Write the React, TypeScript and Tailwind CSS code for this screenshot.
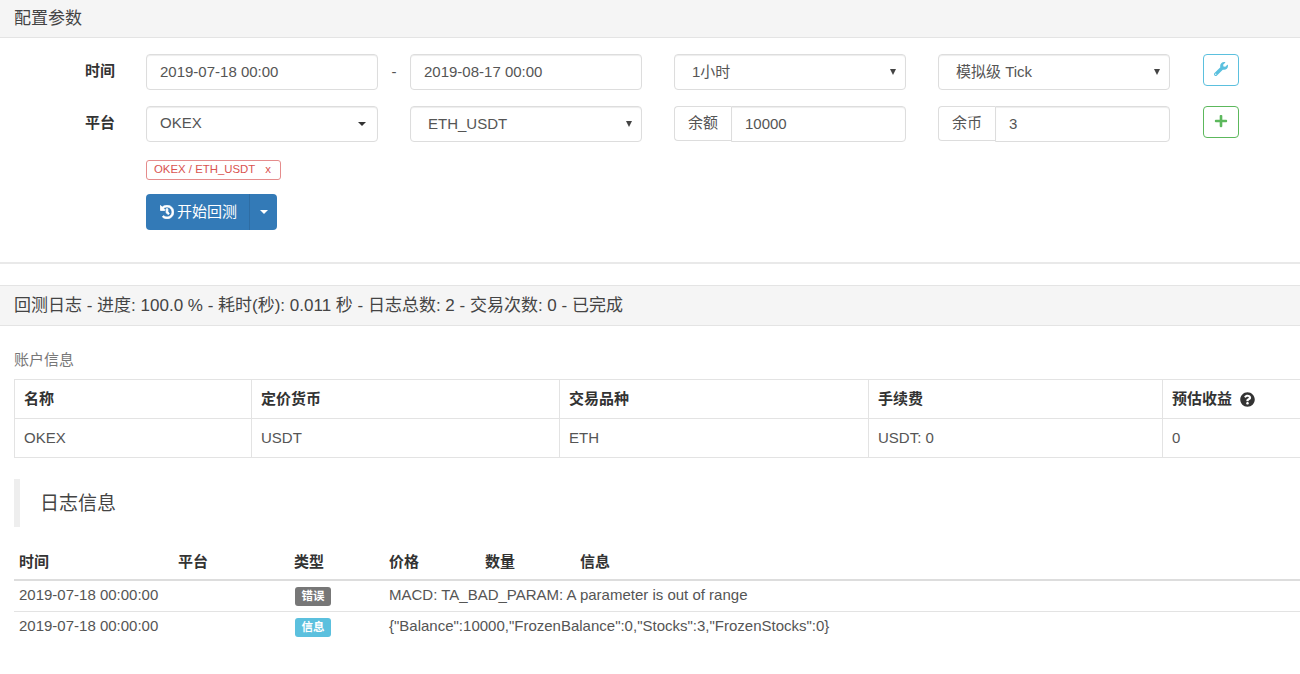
import { FaHistory, FaPlus, FaQuestionCircle, FaWrench } from "react-icons/fa";

const FONT = "font-['Liberation_Sans','Noto_Sans_CJK_SC',sans-serif]";
const FIELD =
  "h-9 rounded border border-[#ddd] bg-white text-[15px] text-[#555] shadow-[inset_0_1px_1px_rgba(0,0,0,0.075)]";

function TextInput({ value }: { value: string }) {
  return <input readOnly value={value} className={`${FIELD} w-[232px] px-[13px] pb-[2px] outline-none`} />;
}

function Select({ value, dark, pad }: { value: string; dark?: boolean; pad: string }) {
  return (
    <div className={`${FIELD} ${pad} relative flex w-[232px] items-center`}>
      <span>{value}</span>
      {dark ? (
        <span className="absolute right-[11px] top-[15px] border-x-[4px] border-t-[4px] border-x-transparent border-t-[#333]" />
      ) : (
        <span className="absolute right-[9px] top-[14px] border-x-[3px] border-t-[6px] border-x-transparent border-t-[#444]" />
      )}
    </div>
  );
}

function AddonInput({ label, value }: { label: string; value: string }) {
  return (
    <div className="flex w-[232px] items-start text-[15px] text-[#555]">
      <div className="flex h-[35px] w-[57px] items-center justify-center rounded-l border border-r-0 border-[#ddd]">
        {label}
      </div>
      <input
        readOnly
        value={value}
        className="h-9 w-[175px] rounded-r border border-[#ddd] px-[13px] pb-[2px] shadow-[inset_0_1px_1px_rgba(0,0,0,0.075)] outline-none"
      />
    </div>
  );
}

function FormRow({ label, children }: { label: string; children: React.ReactNode }) {
  return (
    <div className="flex items-start">
      <label className="mr-[31px] w-[115px] pb-[2px] text-right text-[15px] font-bold leading-[34px] text-[#333]">
        {label}
      </label>
      {children}
    </div>
  );
}

const accountHead = ["名称", "定价货币", "交易品种", "手续费"];
const accountRow = ["OKEX", "USDT", "ETH", "USDT: 0", "0"];
const logHead = ["时间", "平台", "类型", "价格", "数量", "信息"];

const logs = [
  {
    time: "2019-07-18 00:00:00",
    type: "错误",
    color: "bg-[#777]",
    info: "MACD: TA_BAD_PARAM: A parameter is out of range",
  },
  {
    time: "2019-07-18 00:00:00",
    type: "信息",
    color: "bg-[#5bc0de]",
    info: '{"Balance":10000,"FrozenBalance":0,"Stocks":3,"FrozenStocks":0}',
  },
];

export default function App() {
  return (
    <div className={`${FONT} h-[674px] w-[1300px] overflow-hidden bg-white text-[15px] text-[#333]`}>
      {/* Config panel */}
      <div className="flex h-[38px] items-center border-b border-[#e4e4e4] bg-[#f5f5f5] px-[14px] text-[17px] text-[#444]">
        配置参数
      </div>
      <div className="border-b-2 border-[#e9e9e9] pb-[32px] pt-4">
        <div className="flex flex-col gap-4">
          <FormRow label="时间">
            <TextInput value="2019-07-18 00:00" />
            <span className="w-8 text-center leading-9 text-[#555]">-</span>
            <TextInput value="2019-08-17 00:00" />
            <div className="ml-8">
              <Select value="1小时" pad="pl-[17px]" />
            </div>
            <div className="ml-8">
              <Select value="模拟级 Tick" pad="pl-[17px]" />
            </div>
            <button className="ml-[33px] flex h-8 w-9 items-center justify-center rounded border border-[#5bc0de] pb-[3px] text-[14px] text-[#5bc0de]">
              <FaWrench />
            </button>
          </FormRow>
          <FormRow label="平台">
            <Select value="OKEX" dark pad="pl-[13px] pb-[2px]" />
            <div className="ml-8">
              <Select value="ETH_USDT" pad="pl-[17px]" />
            </div>
            <div className="ml-8">
              <AddonInput label="余额" value="10000" />
            </div>
            <div className="ml-8">
              <AddonInput label="余币" value="3" />
            </div>
            <button className="ml-[33px] flex h-8 w-9 items-center justify-center rounded border border-[#5cb85c] pb-[3px] text-[14px] text-[#5cb85c]">
              <FaPlus />
            </button>
          </FormRow>
        </div>
        <div className="ml-[146px] mt-[18px] flex h-5 w-[135px] items-center justify-between rounded-[3px] border border-[#e58c8c] pl-[7px] pr-[9px] text-[11.4px] text-[#d9534f]">
          <span>OKEX / ETH_USDT</span>
          <span>x</span>
        </div>
        <div className="ml-[146px] mt-[14px] flex h-9 w-[131px] rounded bg-[#337ab7] text-white">
          <button className="flex w-[104px] items-center justify-center gap-[3px] border-r border-[#2e6da4] pl-[2px]">
            <FaHistory className="text-[14px] [stroke-width:30px]" />
            <span>开始回测</span>
          </button>
          <button className="flex flex-1 items-center justify-center">
            <span className="border-x-[4px] border-t-[4px] border-x-transparent border-t-white" />
          </button>
        </div>
      </div>

      {/* Backtest log panel */}
      <div className="mt-[21px] flex h-[41px] items-center border-y border-[#e4e4e4] bg-[#f5f5f5] px-[14px] text-[17px] text-[#444]">
        回测日志 - 进度: 100.0 % - 耗时(秒): 0.011 秒 - 日志总数: 2 - 交易次数: 0 - 已完成
      </div>
      <div className="pl-[14px]">
        <div className="mt-[23px] h-[22px] text-[15px] leading-[22px] text-[#777]">账户信息</div>
        <table className="mt-2 w-[1300px] table-fixed border-collapse">
          <colgroup>
            <col className="w-[237px]" />
            <col className="w-[308px]" />
            <col className="w-[309px]" />
            <col className="w-[294px]" />
            <col />
          </colgroup>
          <thead>
            <tr className="h-[39px]">
              {accountHead.map((h) => (
                <th key={h} className="border border-[#e3e3e3] px-[9px] text-left font-bold">
                  {h}
                </th>
              ))}
              <th className="border border-[#e3e3e3] px-[9px] text-left font-bold">
                <span className="flex items-center gap-2">
                  预估收益 <FaQuestionCircle className="text-[15px]" />
                </span>
              </th>
            </tr>
          </thead>
          <tbody>
            <tr className="h-[39px] text-[#555]">
              {accountRow.map((c, i) => (
                <td key={i} className="border border-[#e3e3e3] px-[9px]">
                  {c}
                </td>
              ))}
            </tr>
          </tbody>
        </table>

        <div className="mt-[21px] flex h-12 items-center border-l-[6px] border-[#eee] pl-5 pt-[2px] text-[19px] text-[#444]">
          日志信息
        </div>

        <table className="mt-[26px] w-[1286px] table-fixed border-collapse">
          <colgroup>
            <col className="w-[159px]" />
            <col className="w-[116px]" />
            <col className="w-[95px]" />
            <col className="w-[96px]" />
            <col className="w-[95px]" />
            <col />
          </colgroup>
          <thead>
            <tr className="h-[27px] border-b-2 border-[#ddd]">
              {logHead.map((h) => (
                <th key={h} className="px-[5px] text-left align-top font-bold leading-[18px]">
                  {h}
                </th>
              ))}
            </tr>
          </thead>
          <tbody>
            {logs.map((log, i) => (
              <tr key={i} className={`h-[31px] text-[#555] ${i > 0 ? "border-t border-[#e3e3e3]" : ""}`}>
                <td className="px-[5px] pb-[2px]">{log.time}</td>
                <td />
                <td className="pl-[6px] pr-1 pt-px">
                  <span
                    className={`${log.color} flex h-[19px] w-9 items-center justify-center rounded-[3px] text-[11.5px] font-bold text-white`}
                  >
                    {log.type}
                  </span>
                </td>
                <td colSpan={3} className="px-[5px] pb-[2px]">
                  {log.info}
                </td>
              </tr>
            ))}
          </tbody>
        </table>
      </div>
    </div>
  );
}
